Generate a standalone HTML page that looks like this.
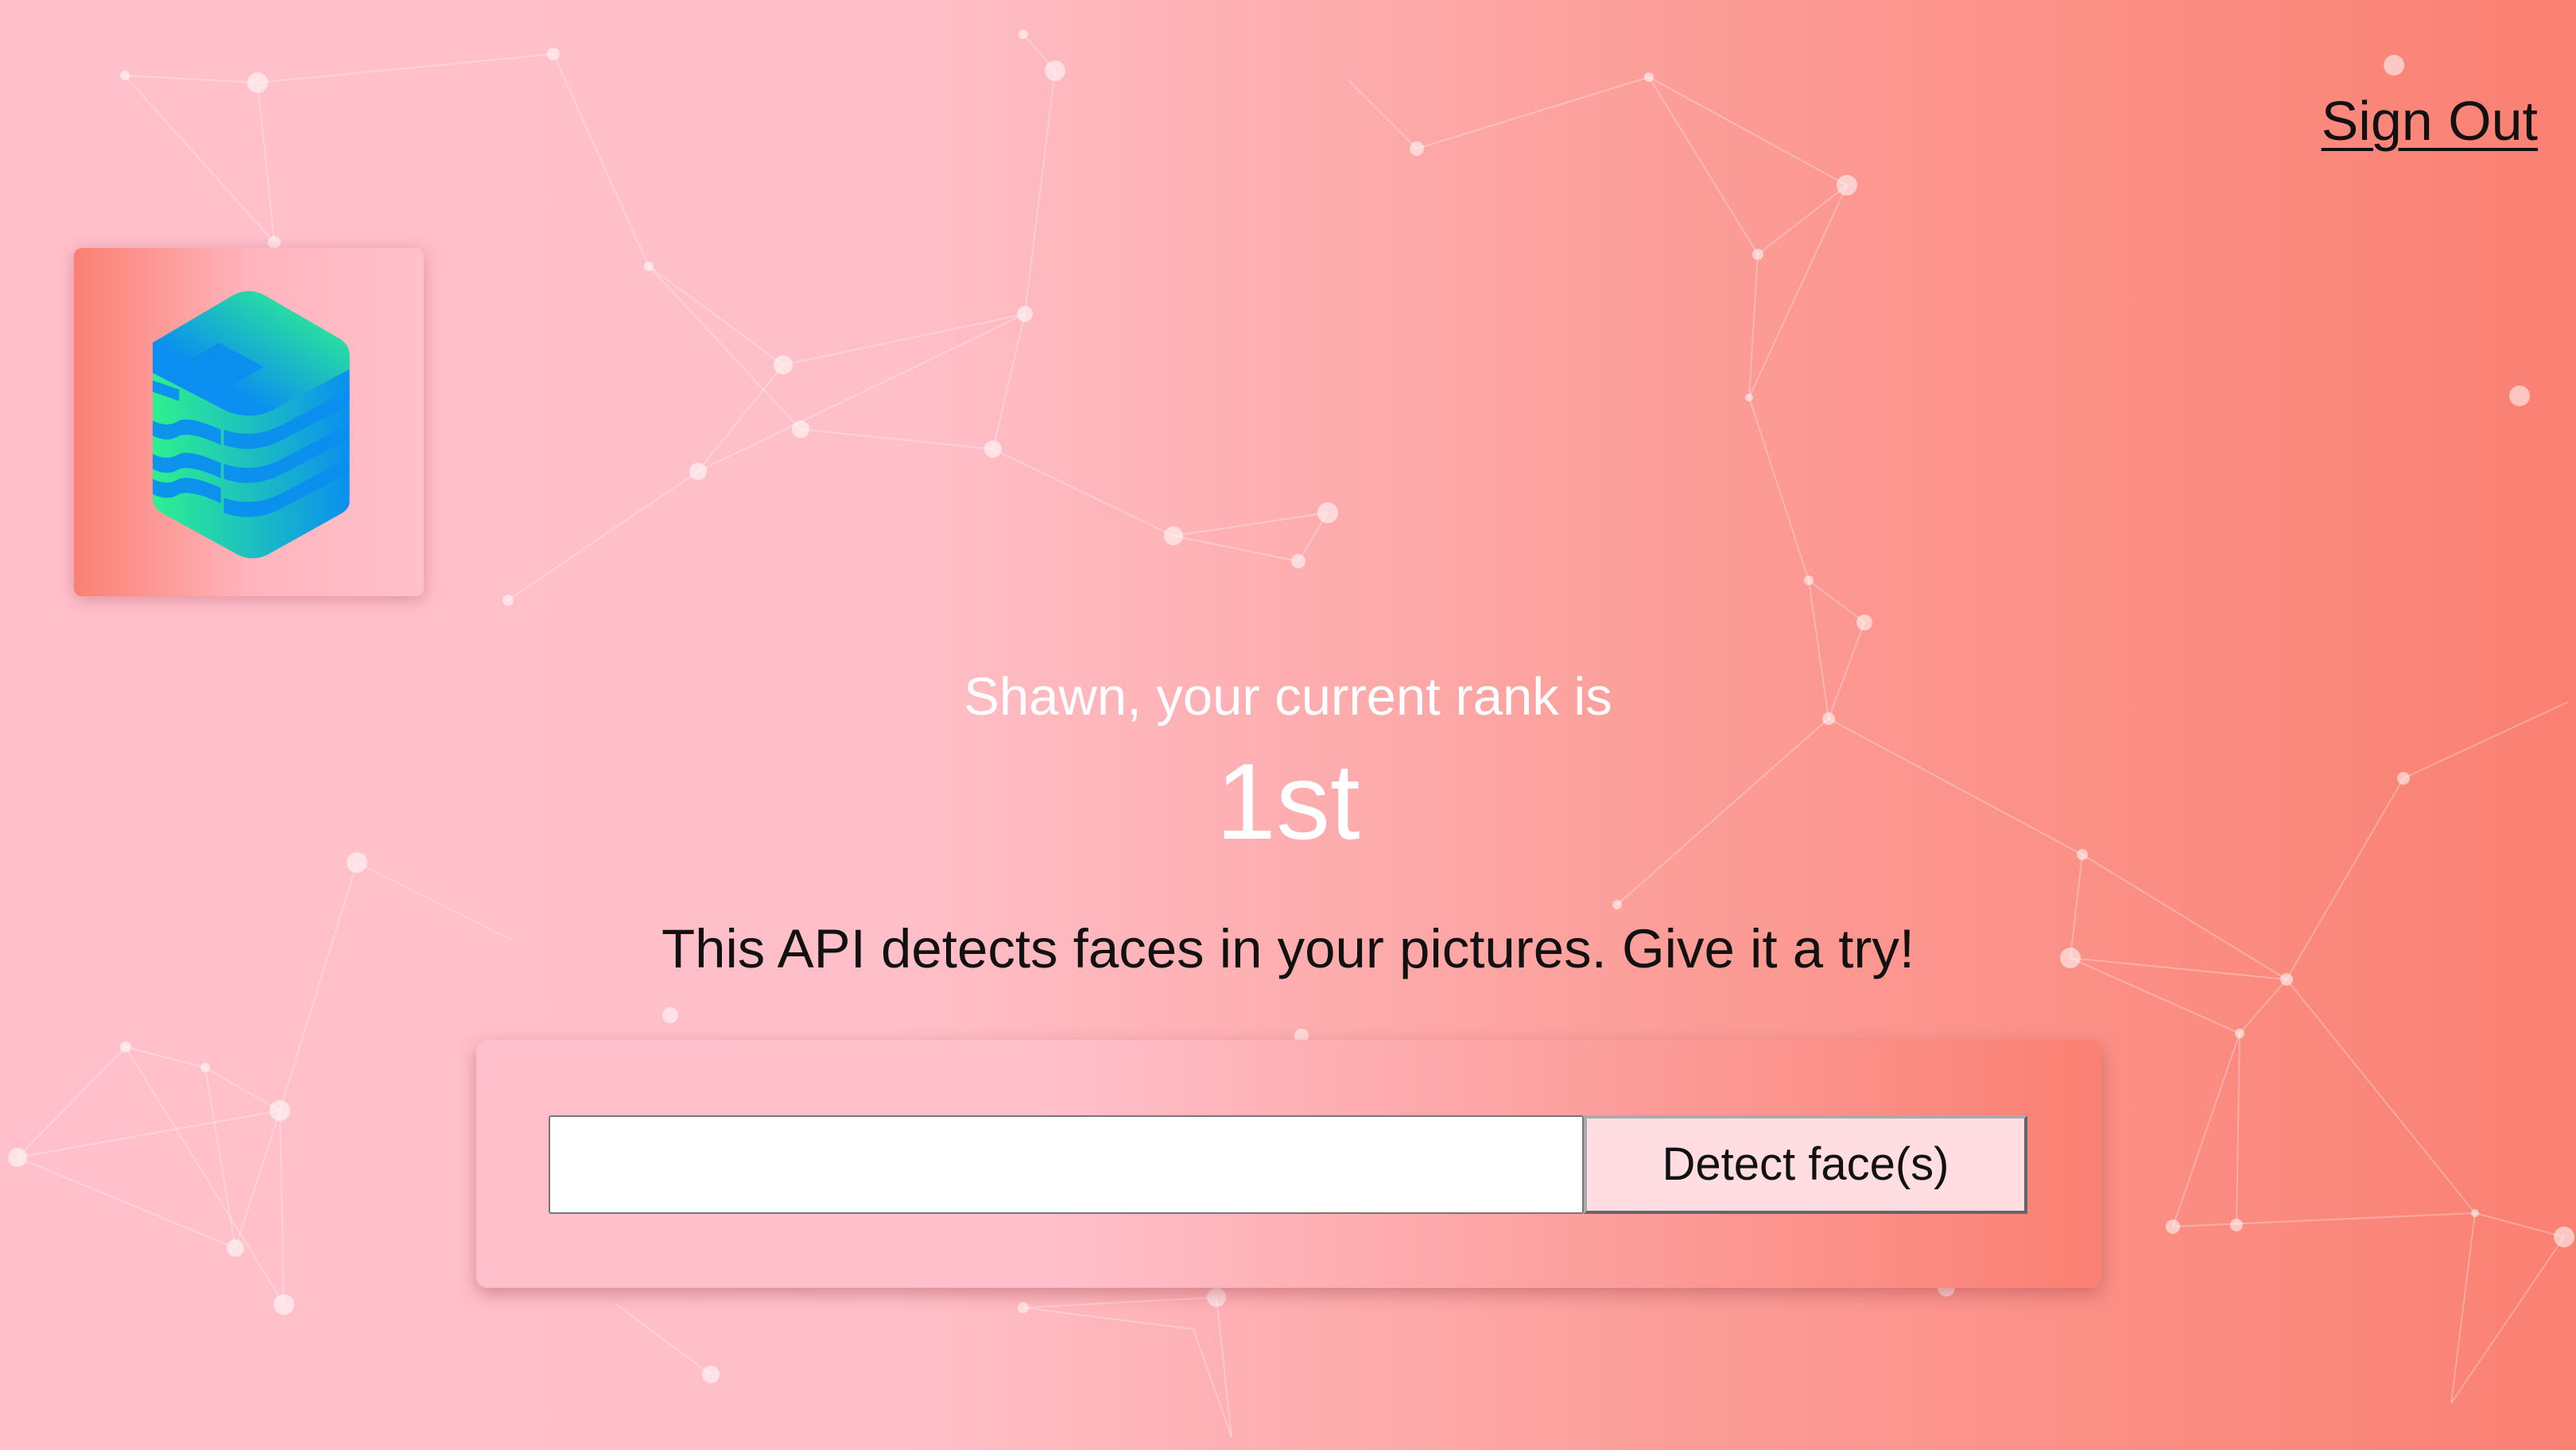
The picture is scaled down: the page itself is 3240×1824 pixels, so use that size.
<!DOCTYPE html>
<html><head><meta charset="utf-8"><style>
html,body{margin:0;padding:0}
body{width:3240px;height:1824px;overflow:hidden;position:relative;font-family:"Liberation Sans",sans-serif;background:linear-gradient(90deg,#ffc0cb 0%,#ffbfc8 35%,#fc9d98 65%,#fa8072 100%)}
svg.bg{position:absolute;left:0;top:0}
.logo{position:absolute;left:93px;top:312px;width:440px;height:438px;border-radius:10px;background:linear-gradient(90deg,#fa8072 0%,#ffb4bd 50%,#ffc0cb 100%);box-shadow:0 4px 20px rgba(160,60,80,.35)}
.t{position:absolute;left:0;width:3240px;text-align:center}
.signout{position:absolute;right:48px;top:112px;font-size:70px;color:#111;text-decoration:underline;text-decoration-thickness:4px;text-underline-offset:10px}
.card{position:absolute;left:599px;top:1308px;width:2044px;height:312px;border-radius:14px;background:linear-gradient(90deg,#ffc0cb 0%,#ffc0cb 35%,#fa8072 100%);box-shadow:0 8px 22px rgba(150,60,70,.4)}
.inp{position:absolute;left:690px;top:1403px;width:1298px;height:120px;background:#fff;border:2px solid #777;border-radius:3px}
.btn{position:absolute;left:1992px;top:1403px;width:558px;height:124px;background:#ffdde0;box-sizing:border-box;border:4px solid #666;border-top-color:#aaa;border-left-color:#aaa;font-size:58px;text-align:center;line-height:116px;color:#111}
</style></head><body>
<svg class="bg" width="3240" height="1824" stroke="rgba(255,255,255,.3)" stroke-width="2" fill="rgba(255,255,255,.55)">
<g>
<line x1="157" y1="95" x2="324" y2="104"/><line x1="157" y1="95" x2="345" y2="305"/><line x1="324" y1="104" x2="345" y2="305"/><line x1="324" y1="104" x2="696" y2="68"/>
<line x1="696" y1="68" x2="816" y2="335"/><line x1="816" y1="335" x2="985" y2="459"/><line x1="816" y1="335" x2="1007" y2="540"/><line x1="985" y1="459" x2="878" y2="593"/><line x1="985" y1="459" x2="1289" y2="395"/><line x1="1007" y1="540" x2="1249" y2="565"/><line x1="878" y1="593" x2="1289" y2="395"/><line x1="1289" y1="395" x2="1249" y2="565"/><line x1="1249" y1="565" x2="1476" y2="674"/><line x1="878" y1="593" x2="639" y2="755"/><line x1="1476" y1="674" x2="1670" y2="645"/><line x1="1476" y1="674" x2="1633" y2="706"/><line x1="1633" y1="706" x2="1670" y2="645"/>
<line x1="1287" y1="43" x2="1327" y2="89"/><line x1="1327" y1="89" x2="1289" y2="395"/><line x1="1696" y1="101" x2="1782" y2="187"/><line x1="1782" y1="187" x2="2074" y2="97"/><line x1="2074" y1="97" x2="2323" y2="233"/><line x1="2074" y1="97" x2="2211" y2="320"/><line x1="2323" y1="233" x2="2211" y2="320"/><line x1="2323" y1="233" x2="2200" y2="500"/><line x1="2211" y1="320" x2="2200" y2="500"/><line x1="2200" y1="500" x2="2275" y2="730"/><line x1="2275" y1="730" x2="2345" y2="783"/><line x1="2345" y1="783" x2="2300" y2="904"/><line x1="2275" y1="730" x2="2300" y2="904"/><line x1="2300" y1="904" x2="2034" y2="1138"/><line x1="2300" y1="904" x2="2619" y2="1075"/>
<line x1="2619" y1="1075" x2="2604" y2="1205"/><line x1="2619" y1="1075" x2="2876" y2="1232"/><line x1="2604" y1="1205" x2="2876" y2="1232"/><line x1="2604" y1="1205" x2="2817" y2="1300"/><line x1="2876" y1="1232" x2="2817" y2="1300"/><line x1="2876" y1="1232" x2="3023" y2="979"/><line x1="3023" y1="979" x2="3230" y2="883"/><line x1="2817" y1="1300" x2="2733" y2="1543"/><line x1="2817" y1="1300" x2="2813" y2="1541"/><line x1="2733" y1="1543" x2="3113" y2="1526"/><line x1="3113" y1="1526" x2="3225" y2="1556"/><line x1="3113" y1="1526" x2="3083" y2="1765"/><line x1="3225" y1="1556" x2="3083" y2="1765"/><line x1="2876" y1="1232" x2="3113" y2="1526"/>
<line x1="449" y1="1085" x2="643" y2="1182"/><line x1="449" y1="1085" x2="352" y2="1397"/><line x1="158" y1="1317" x2="258" y2="1343"/><line x1="158" y1="1317" x2="22" y2="1456"/><line x1="258" y1="1343" x2="352" y2="1397"/><line x1="258" y1="1343" x2="296" y2="1570"/><line x1="22" y1="1456" x2="296" y2="1570"/><line x1="352" y1="1397" x2="296" y2="1570"/><line x1="352" y1="1397" x2="357" y2="1641"/><line x1="158" y1="1317" x2="357" y2="1641"/><line x1="22" y1="1456" x2="352" y2="1397"/>
<line x1="1287" y1="1645" x2="1530" y2="1632"/><line x1="1287" y1="1645" x2="1501" y2="1672"/><line x1="1501" y1="1672" x2="1549" y2="1808"/><line x1="1530" y1="1632" x2="1549" y2="1808"/><line x1="774" y1="1640" x2="894" y2="1729"/>
</g>
<g stroke="none">
<circle cx="157" cy="95" r="6"/><circle cx="324" cy="104" r="13"/><circle cx="696" cy="68" r="8"/><circle cx="345" cy="305" r="8"/><circle cx="816" cy="335" r="6"/><circle cx="985" cy="459" r="12"/><circle cx="1007" cy="540" r="11"/><circle cx="878" cy="593" r="11"/><circle cx="1289" cy="395" r="10"/><circle cx="1249" cy="565" r="11"/><circle cx="1476" cy="674" r="12"/><circle cx="1670" cy="645" r="13"/><circle cx="1633" cy="706" r="9"/><circle cx="639" cy="755" r="7"/>
<circle cx="1287" cy="43" r="6"/><circle cx="1327" cy="89" r="13"/><circle cx="1782" cy="187" r="9"/><circle cx="2074" cy="97" r="6"/><circle cx="2323" cy="233" r="13"/><circle cx="2211" cy="320" r="7"/><circle cx="2200" cy="500" r="5"/><circle cx="2275" cy="730" r="6"/><circle cx="2345" cy="783" r="10"/><circle cx="2300" cy="904" r="8"/><circle cx="3011" cy="82" r="13"/><circle cx="3169" cy="498" r="13"/>
<circle cx="2619" cy="1075" r="7"/><circle cx="2604" cy="1205" r="13"/><circle cx="2876" cy="1232" r="8"/><circle cx="2817" cy="1300" r="6"/><circle cx="3023" cy="979" r="8"/><circle cx="2733" cy="1543" r="9"/><circle cx="2813" cy="1541" r="8"/><circle cx="3113" cy="1526" r="5"/><circle cx="3225" cy="1556" r="13"/><circle cx="2034" cy="1138" r="6"/>
<circle cx="449" cy="1085" r="13"/><circle cx="158" cy="1317" r="7"/><circle cx="258" cy="1343" r="6"/><circle cx="352" cy="1397" r="13"/><circle cx="22" cy="1456" r="12"/><circle cx="296" cy="1570" r="11"/><circle cx="357" cy="1641" r="13"/><circle cx="843" cy="1277" r="10"/><circle cx="894" cy="1729" r="11"/><circle cx="1530" cy="1632" r="12"/><circle cx="1287" cy="1645" r="7"/><circle cx="2448" cy="1620" r="11"/><circle cx="1637" cy="1303" r="9"/>
</g></svg>
<div class="logo"><svg width="440" height="438" viewBox="0 0 460 460">
<defs><linearGradient id="g1" x1="0" y1="0" x2="1" y2="0"><stop offset="0" stop-color="#2ef08f"/><stop offset="1" stop-color="#0b8ff0"/></linearGradient>
<linearGradient id="g2" x1="1" y1="0" x2="0" y2="1"><stop offset="0.1" stop-color="#2ef08f"/><stop offset=".7" stop-color="#0b8ff0"/></linearGradient></defs>
<path d="M103 125 L210 62 Q230 52 250 62 L350 120 Q363 128 363 142 L363 335 Q363 345 350 352 L255 405 Q235 415 215 405 L115 350 Q103 343 103 330 Z" fill="url(#g1)"/>
<path d="M103 125 L210 62 Q230 52 250 62 L350 120 Q363 128 363 142 L363 160 L260 215 Q230 228 200 215 L103 165 Z" fill="url(#g2)"/>
<g fill="#0b8ff0" opacity=".95"><path d="M103 175 l35 12 v15 l-35 -12z"/><path d="M103 228 q20 10 35 0 q15 -6 55 12 v20 q-40 -18 -55 -12 q-15 10 -35 0z"/><path d="M103 272 q20 10 35 0 q15 -6 55 12 v20 q-40 -18 -55 -12 q-15 10 -35 0z"/><path d="M103 305 q20 10 35 0 q15 -6 55 12 v20 q-40 -18 -55 -12 q-15 10 -35 0z"/>
<path d="M197 240 q40 14 80 -8 l86 -45 v20 l-86 45 q-40 22 -80 8z"/><path d="M197 285 q40 14 80 -8 l86 -45 v20 l-86 45 q-40 22 -80 8z"/><path d="M197 330 q40 14 80 -8 l86 -45 v20 l-86 45 q-40 22 -80 8z"/><path d="M140 155 l50 -30 l60 32 l-55 32z"/></g>
</svg></div>
<div class="signout">Sign Out</div>
<div class="t" style="top:838px;font-size:67px;color:#fff">Shawn, your current rank is</div>
<div class="t" style="top:930px;font-size:136px;color:#fff">1st</div>
<div class="t" style="top:1154px;font-size:69px;color:#111">This API detects faces in your pictures. Give it a try!</div>
<div class="card"></div>
<div class="inp"></div>
<div class="btn">Detect face(s)</div>
</body></html>
